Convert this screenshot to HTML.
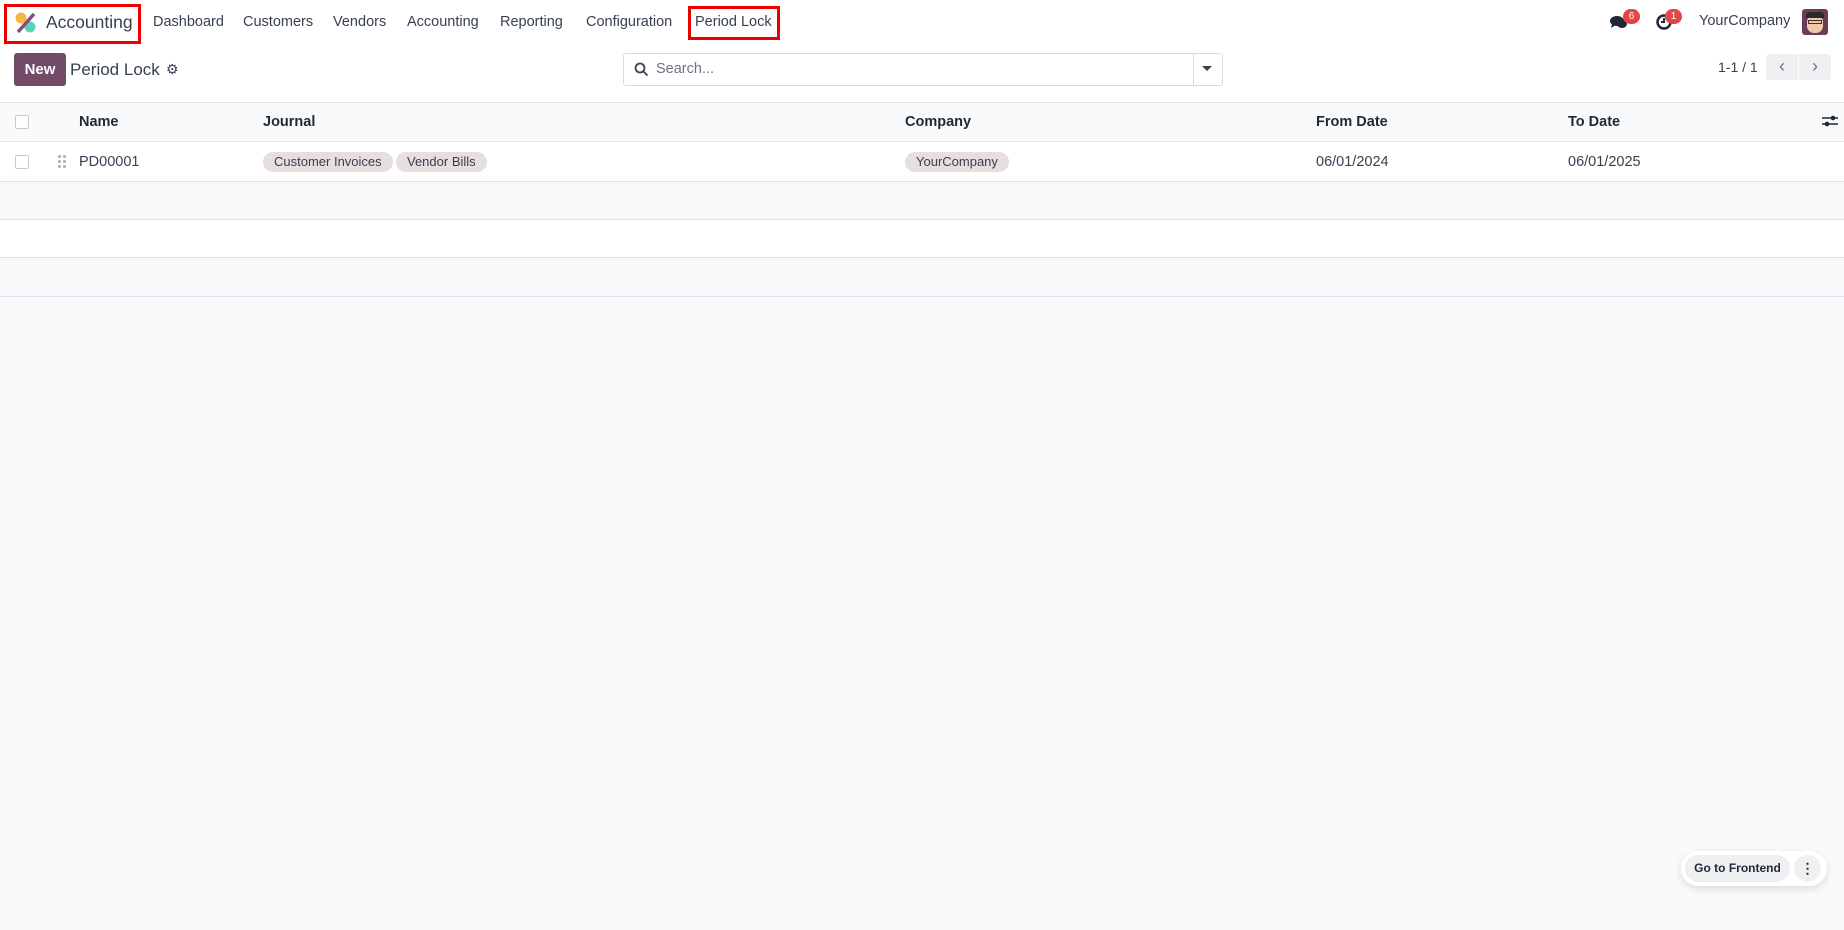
<!DOCTYPE html>
<html><head><meta charset="utf-8"><style>
*{box-sizing:border-box;margin:0;padding:0}
body{width:1844px;height:930px;background:#f9fafb;font-family:"Liberation Sans",sans-serif;color:#374151;font-size:14.5px;position:relative;overflow:hidden}
.a{position:absolute;white-space:nowrap}
.nav{position:absolute;left:0;top:0;width:1844px;height:46px;background:#fff}
.cp{position:absolute;left:0;top:46px;width:1844px;height:56px;background:#fff}
.red{position:absolute;border:3px solid #e00;}
.th{position:absolute;left:0;top:102px;width:1844px;height:40px;background:#f9fafb;border-top:1px solid #dee2e6;border-bottom:1px solid #dee2e6}
.row{position:absolute;left:0;width:1844px;border-bottom:1px solid #dee2e6}
.cb{position:absolute;width:14px;height:14px;border:1px solid #c5c9ce;border-radius:2px;background:#fff}
.tag{position:absolute;height:20px;line-height:20px;background:#e6dedf;border-radius:10px;padding:0 11px;font-size:13px;color:#374151}
.b{font-weight:bold;color:#1f2937}
.dot{position:absolute;width:3px;height:3px;background:#adb5bd;border-radius:1px}
</style></head><body>
<div class="nav"></div>
<div class="red" style="left:4px;top:4px;width:137px;height:40px"></div>
<svg class="a" style="left:14px;top:11px" width="24" height="24" viewBox="0 0 24 24"><circle cx="7" cy="7" r="5.5" fill="#f8b640"/><circle cx="16" cy="16" r="5.5" fill="#5fd3b9"/><line x1="20" y1="3" x2="4" y2="21" stroke="#8a4a82" stroke-width="3.5"/></svg>
<div class="a" style="left:46px;top:12px;font-size:17.5px;color:#374151">Accounting</div>
<div class="a" style="left:153px;top:14px">Dashboard</div>
<div class="a" style="left:243px;top:14px">Customers</div>
<div class="a" style="left:333px;top:14px">Vendors</div>
<div class="a" style="left:407px;top:14px">Accounting</div>
<div class="a" style="left:500px;top:14px">Reporting</div>
<div class="a" style="left:586px;top:14px">Configuration</div>
<div class="a" style="left:695px;top:14px">Period Lock</div>
<div class="red" style="left:688px;top:6px;width:92px;height:34px"></div>
<svg class="a" style="left:1609px;top:14px" width="20" height="16" viewBox="0 0 20 16"><ellipse cx="8" cy="7" rx="7" ry="5" fill="#1f2937"/><path d="M3 10 L2 14 L7 11Z" fill="#1f2937"/><ellipse cx="13" cy="10" rx="5" ry="4" fill="#1f2937"/></svg>
<div class="a" style="left:1623px;top:9px;width:17px;height:15px;background:#e04747;border-radius:8px;color:#fff;font-size:10px;text-align:center;line-height:15px">6</div>
<svg class="a" style="left:1655px;top:13px" width="18" height="18" viewBox="0 0 18 18"><circle cx="9" cy="9" r="6.5" fill="none" stroke="#1f2937" stroke-width="2.5"/><path d="M9 5v4h-3" stroke="#1f2937" stroke-width="2" fill="none"/></svg>
<div class="a" style="left:1665px;top:9px;width:17px;height:15px;background:#e04747;border-radius:8px;color:#fff;font-size:10px;text-align:center;line-height:15px">1</div>
<div class="a" style="left:1699px;top:13px">YourCompany</div>
<div class="a" style="left:1802px;top:9px;width:26px;height:26px;background:#6b3c54;border-radius:3px;overflow:hidden"><div style="position:absolute;left:5px;top:6px;width:16px;height:18px;background:#f2c9a8;border-radius:7px"></div><div style="position:absolute;left:4px;top:3px;width:18px;height:6px;background:#2a2a2a;border-radius:4px 4px 0 0"></div><div style="position:absolute;left:6px;top:11px;width:14px;height:4px;border:1px solid #333"></div></div>

<div class="cp"></div>
<div class="a" style="left:14px;top:53px;width:52px;height:33px;background:#714b67;border-radius:3px;color:#fff;font-weight:bold;text-align:center;line-height:33px;font-size:15px">New</div>
<div class="a" style="left:70px;top:60px;font-size:17px;color:#374151">Period Lock</div>
<div class="a" style="left:166px;top:61px;font-size:14px;color:#374151">⚙</div>
<div class="a" style="left:623px;top:53px;width:600px;height:33px;border:1px solid #d8dadd;border-radius:3px;background:#fff"></div>
<div class="a" style="left:1193px;top:54px;width:1px;height:31px;background:#d8dadd"></div>
<svg class="a" style="left:634px;top:62px" width="15" height="15" viewBox="0 0 15 15"><circle cx="6" cy="6" r="4.5" fill="none" stroke="#374151" stroke-width="1.8"/><line x1="9.5" y1="9.5" x2="13.5" y2="13.5" stroke="#374151" stroke-width="1.8"/></svg>
<div class="a" style="left:656px;top:61px;color:#6b7280">Search...</div>
<div class="a" style="left:1202px;top:66px;width:0;height:0;border-left:5px solid transparent;border-right:5px solid transparent;border-top:5px solid #374151"></div>
<div class="a" style="left:1718px;top:59px;font-size:14px">1-1 / 1</div>
<div class="a" style="left:1766px;top:54px;width:32px;height:26px;background:#eef0f2;border-radius:3px 0 0 3px;text-align:center;line-height:24px;color:#6b7280;font-size:18px">‹</div>
<div class="a" style="left:1799px;top:54px;width:32px;height:26px;background:#eef0f2;border-radius:0 3px 3px 0;text-align:center;line-height:24px;color:#6b7280;font-size:18px">›</div>

<div class="th"></div>
<div class="cb" style="left:15px;top:115px"></div>
<div class="a b" style="left:79px;top:114px">Name</div>
<div class="a b" style="left:263px;top:114px">Journal</div>
<div class="a b" style="left:905px;top:114px">Company</div>
<div class="a b" style="left:1316px;top:114px">From Date</div>
<div class="a b" style="left:1568px;top:114px">To Date</div>
<svg class="a" style="left:1822px;top:114px" width="16" height="14" viewBox="0 0 16 14"><line x1="0" y1="4" x2="16" y2="4" stroke="#1f2937" stroke-width="1.5"/><line x1="0" y1="10" x2="16" y2="10" stroke="#1f2937" stroke-width="1.5"/><circle cx="11" cy="4" r="2.3" fill="#1f2937"/><circle cx="5" cy="10" r="2.3" fill="#1f2937"/></svg>

<div class="row" style="top:142px;height:40px;background:#fff"></div>
<div class="cb" style="left:15px;top:155px"></div>
<div class="dot" style="left:58px;top:155px"></div><div class="dot" style="left:63px;top:155px"></div>
<div class="dot" style="left:58px;top:160px"></div><div class="dot" style="left:63px;top:160px"></div>
<div class="dot" style="left:58px;top:165px"></div><div class="dot" style="left:63px;top:165px"></div>
<div class="a" style="left:79px;top:154px">PD00001</div>
<div class="tag" style="left:263px;top:152px">Customer Invoices</div>
<div class="tag" style="left:396px;top:152px">Vendor Bills</div>
<div class="tag" style="left:905px;top:152px">YourCompany</div>
<div class="a" style="left:1316px;top:154px">06/01/2024</div>
<div class="a" style="left:1568px;top:154px">06/01/2025</div>
<div class="row" style="top:182px;height:38px;background:#f9fafb"></div>
<div class="row" style="top:220px;height:38px;background:#fff"></div>
<div class="row" style="top:258px;height:39px;background:#f9fafb"></div>

<div class="a" style="left:1681px;top:851px;width:146px;height:35px;background:#fff;border-radius:18px;box-shadow:0 3px 8px rgba(0,0,0,.12)"></div>
<div class="a" style="left:1685px;top:855px;width:105px;height:27px;background:#eef0f2;border-radius:14px;text-align:center;line-height:27px;font-size:12px;font-weight:bold;color:#1f2937">Go to Frontend</div>
<div class="a" style="left:1794px;top:855px;width:27px;height:27px;background:#eef0f2;border-radius:14px;text-align:center;line-height:27px;font-size:14px;font-weight:bold;color:#1f2937">⋮</div>
</body></html>
